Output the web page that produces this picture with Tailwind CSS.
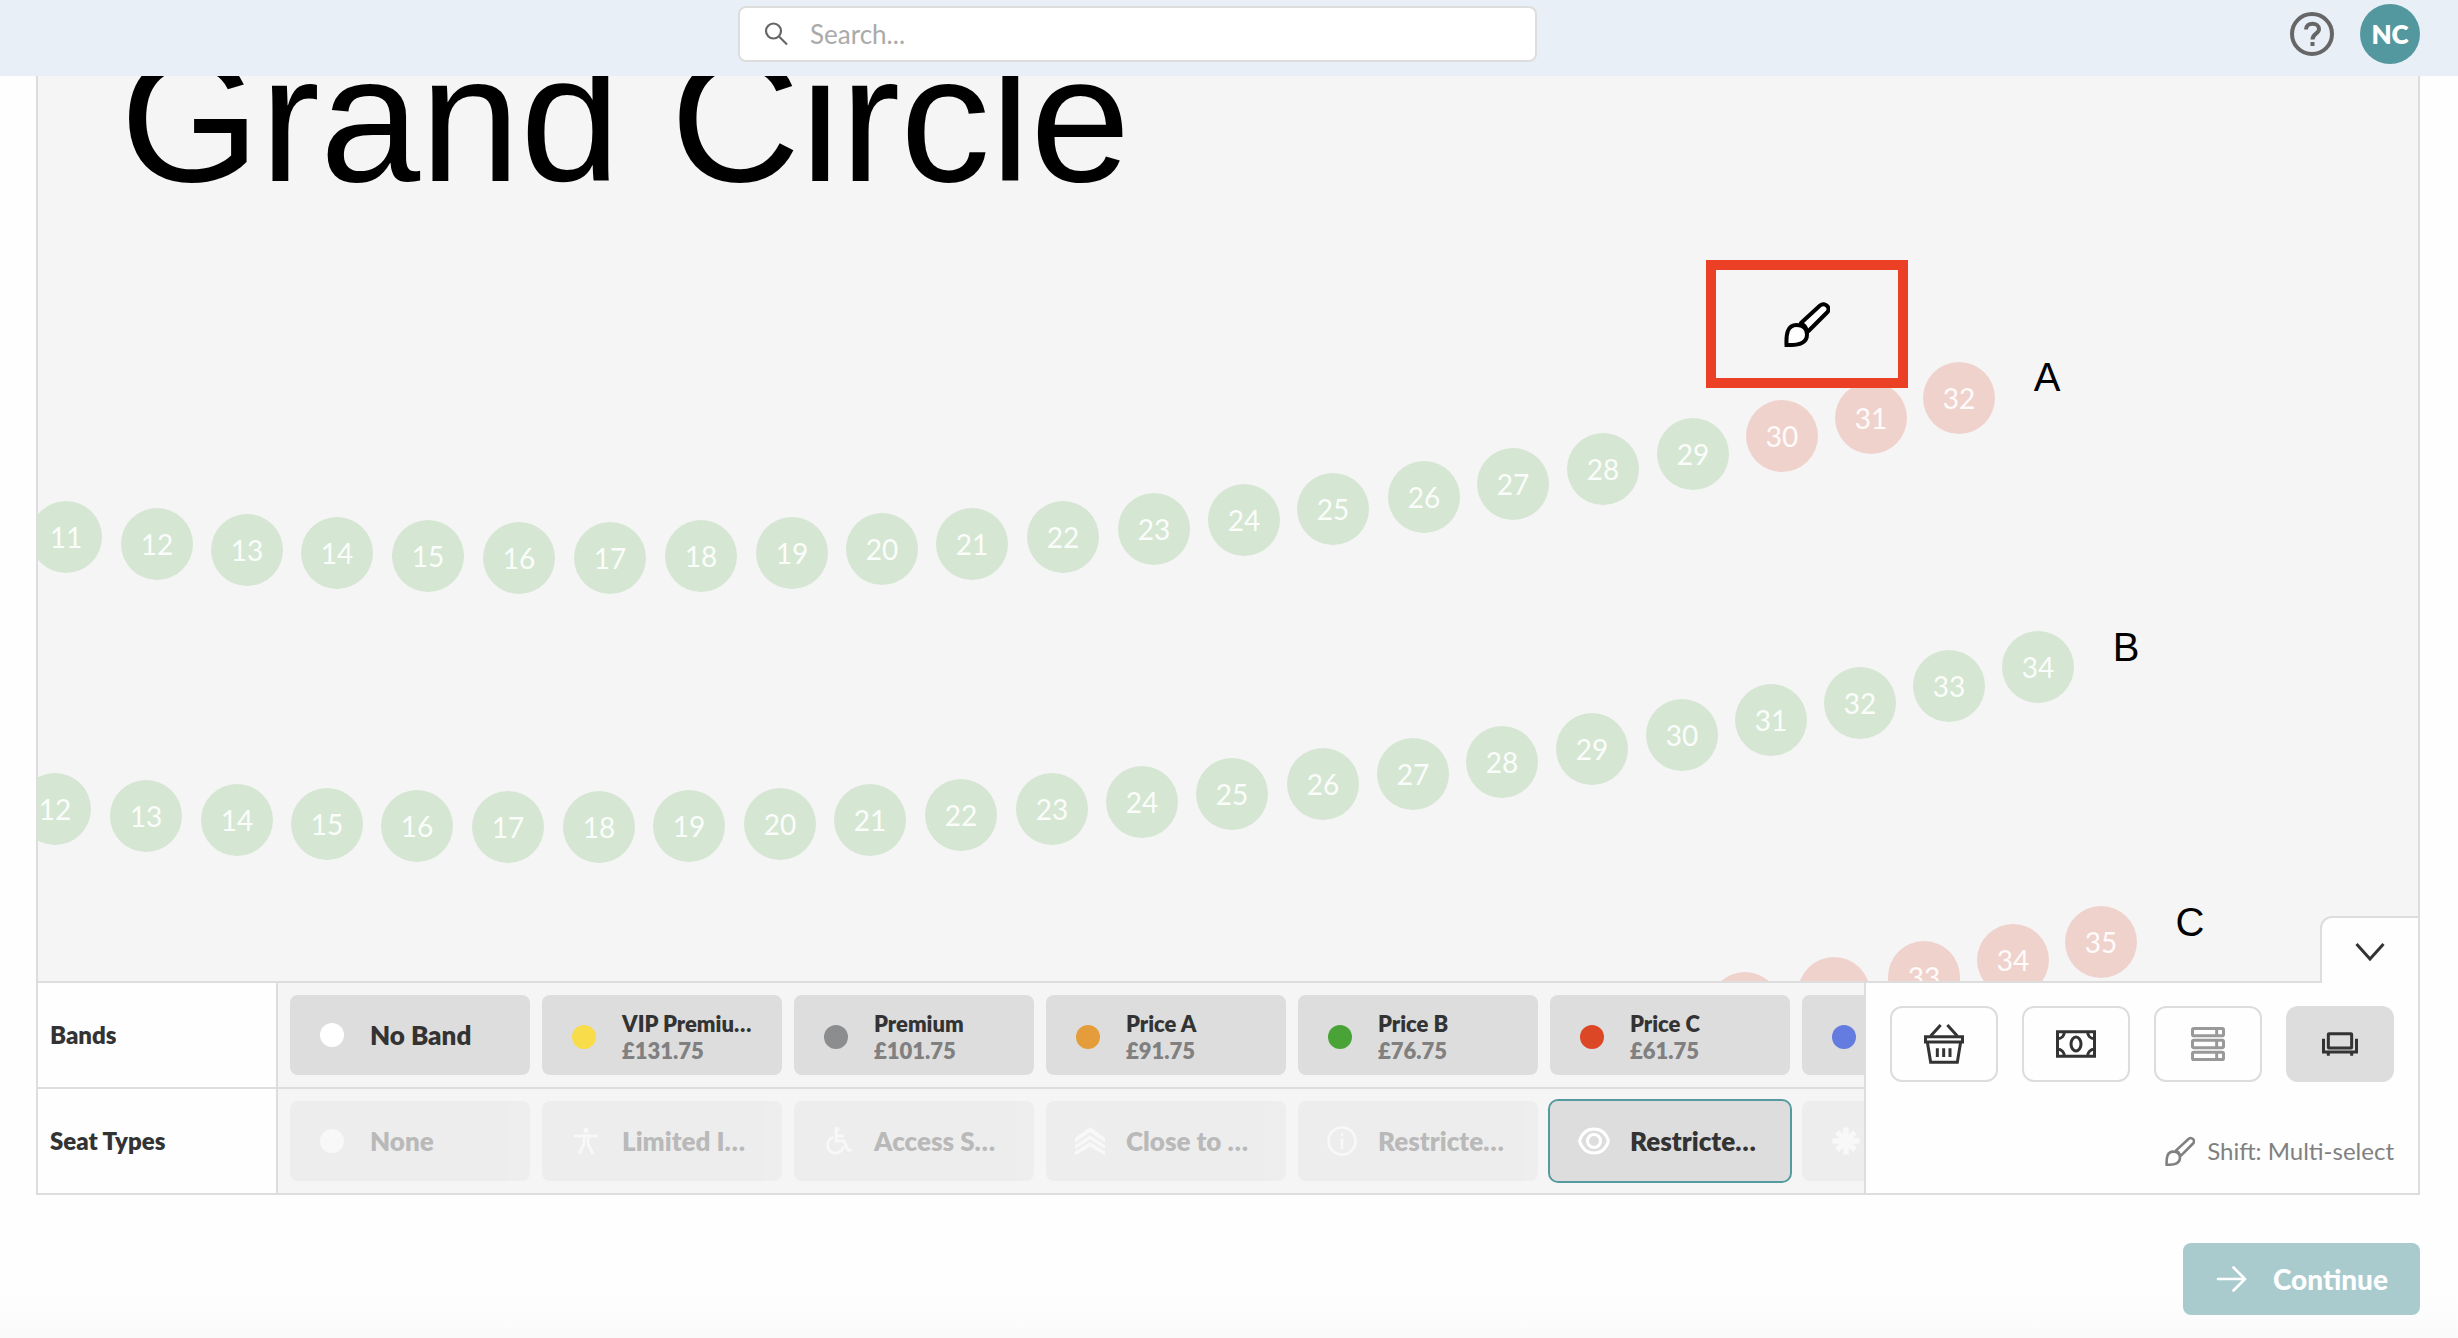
<!DOCTYPE html>
<html lang="en">
<head>
  <meta charset="UTF-8">
  <meta name="viewport" content="width=device-width, initial-scale=1.0">
  <title>Seating Plan - Grand Circle</title>
  <script src="https://cdn.jsdelivr.net/npm/@tailwindcss/browser@4"></script>
</head>
<body class="min-h-screen flex flex-col bg-[#fefefe] font-['Lato',sans-serif] text-[#333333]">

  <!-- Shared icons -->
  <svg class="hidden">
    <symbol id="brush" viewBox="0 0 46 46">
      <path d="M17 22 36 4.500c5-4 11.500 2.500 7 7L24.500 30" stroke-width="4" stroke="currentColor" stroke-linecap="round"/>
      <path d="M2.500 44C2 33 3.500 24 12.500 24c7 0 10.500 4 10.500 9.500C23 41.500 16 44.500 2.500 44Z" stroke-width="4" stroke="currentColor"/>
      <path d="M17 22.500c4 1 5.500 3.500 6.500 7.500" stroke-width="3" stroke="currentColor" fill="none"/>
    </symbol>
  </svg>

  <!-- Header -->
  <header class="h-[76px] shrink-0 bg-[#e8eff7] flex items-start justify-between pr-[38px]">
    <label for="search" class="ml-[30.5%] mt-1.5 w-[33%] h-14 flex items-center gap-[22px] px-6 bg-white border-2 border-[#dddddd] rounded-lg">
      <svg class="w-6 h-6 shrink-0" viewBox="0 0 24 24" fill="none" stroke="#666666" stroke-width="2.200">
        <circle cx="9.500" cy="9" r="7.500"/>
        <path d="m15 14.500 8 8"/>
      </svg>
      <input id="search" type="text" placeholder="Search..." aria-label="Search" class="w-full text-[26px] leading-8 placeholder:text-[#aaaaaa] focus:outline-none">
    </label>
    <div class="flex items-center gap-[26px] mt-1">
      <button type="button" aria-label="Help" class="w-11 h-11">
        <svg class="w-11 h-11" viewBox="0 0 44 44" fill="none" stroke="#666666" stroke-width="4">
          <circle cx="22" cy="22" r="20"/>
          <path d="M16 17.500c0-8 13-7.500 13-.5 0 5-6.500 4.500-6.500 10.500"/>
          <path d="M22.500 30v4"/>
        </svg>
      </button>
      <button type="button" class="w-15 h-15 rounded-full bg-[#54989f] text-white text-[26px] leading-8 font-extrabold">NC</button>
    </div>
  </header>

  <!-- Seating plan -->
  <main class="flex-1 flex flex-col ml-9 mr-[38px]">
    <section id="seat-map" class="flex-1 relative overflow-hidden bg-[#f5f5f5] border-x-2 border-[#dddddd] text-black font-['Liberation_Sans',sans-serif]">
      <h1 class="absolute left-[82px] -top-[61px] text-[180px] leading-[208px] whitespace-nowrap">Grand Circle</h1>
      <div class="absolute z-10 left-[1668px] top-[184px] w-[202px] h-[128px] border-10 border-[#eb4025] flex items-center justify-center">
        <svg class="w-[46px] h-[46px] text-black" fill="white"><use href="#brush"/></svg>
      </div>
    </section>

    <!-- Bands and seat types -->
    <section class="relative flex border-2 border-[#dddddd]">
      <button type="button" aria-label="Collapse panel" class="absolute bottom-full -right-0.5 w-[100px] h-[67px] bg-[#fefefe] border-2 border-b-0 border-[#dddddd] rounded-tl-xl flex items-center justify-center">
        <svg class="w-8 h-8" viewBox="0 0 32 32" fill="none" stroke="#333333" stroke-width="3"><path d="m2.500 9 13.500 15L29.500 9"/></svg>
      </button>

      <div class="w-60 shrink-0 border-r-2 border-[#dddddd] text-2xl font-extrabold">
        <h2 class="h-[104px] px-3 flex items-center">Bands</h2>
        <h2 class="h-[106px] px-3 flex items-center border-t-2 border-[#dddddd]">Seat Types</h2>
      </div>

      <div class="flex-1 min-w-0 overflow-hidden bg-[#f5f5f5]">
        <div id="bands" class="flex gap-3 p-3"></div>
        <div id="seat-types" class="flex gap-3 p-3 border-t-2 border-[#dddddd]">
          <button type="button" disabled class="w-60 h-20 shrink-0 pl-7 flex items-center rounded-lg bg-[#dddddd] opacity-30 text-[26px] leading-8 font-extrabold">
            <span class="w-7 mr-6 flex justify-center"><span class="w-6 h-6 rounded-full bg-white"></span></span>None
          </button>
          <button type="button" disabled class="w-60 h-20 shrink-0 pl-7 flex items-center gap-5 rounded-lg bg-[#dddddd] opacity-30 text-[26px] leading-8 font-extrabold">
            <svg class="w-8 h-8" viewBox="0 0 32 32" fill="none" stroke="white" stroke-width="2.800">
              <circle cx="16" cy="5.500" r="2.500" fill="white" stroke="none"/>
              <path d="M4 11h24"/>
              <path d="m9 29 5-10v-8h4v8l5 10" />
            </svg>Limited I…
          </button>
          <button type="button" disabled class="w-60 h-20 shrink-0 pl-7 flex items-center gap-5 rounded-lg bg-[#dddddd] opacity-30 text-[26px] leading-8 font-extrabold">
            <svg class="w-8 h-8" viewBox="0 0 32 32" fill="none" stroke="white" stroke-width="2.800">
              <circle cx="15" cy="4.500" r="2.500" fill="white" stroke="none"/>
              <path d="M14 6v10h8l4 9h3.500M14 11h8"/>
              <path d="M11 12.500a8 8 0 1 0 10.500 9"/>
            </svg>Access S…
          </button>
          <button type="button" disabled class="w-60 h-20 shrink-0 pl-7 flex items-center gap-5 rounded-lg bg-[#dddddd] opacity-30 text-[26px] leading-8 font-extrabold">
            <svg class="w-8 h-8" viewBox="0 0 32 32" fill="white">
              <path d="M1 13 16 2l15 11v4.500L16 7.500l-15 10ZM1 20l15-10 15 10v4L16 14.500 1 24ZM1 26.500l15-9.500 15 9.500v4L16 21.500 1 30.500Z"/>
            </svg>Close to …
          </button>
          <button type="button" disabled class="w-60 h-20 shrink-0 pl-7 flex items-center gap-5 rounded-lg bg-[#dddddd] opacity-30 text-[26px] leading-8 font-extrabold">
            <svg class="w-8 h-8" viewBox="0 0 32 32" fill="none" stroke="white" stroke-width="2.600">
              <circle cx="16" cy="16" r="13.500"/>
              <path d="M16 8v3.500M16 13.500V24"/>
            </svg>Restricte…
          </button>
          <button type="button" aria-pressed="true" class="w-60 h-20 shrink-0 pl-7 flex items-center gap-5 rounded-lg bg-[#dddddd] outline-2 outline-[#549a9f] text-[26px] leading-8 font-extrabold">
            <svg class="w-8 h-8" viewBox="0 0 32 32" fill="none" stroke="white" stroke-width="3">
              <path d="M1.500 16C4 8 9 4 16 4s12 4 14.500 12C28 24 23 28 16 28S4 24 1.500 16Z"/>
              <circle cx="16" cy="16" r="6.500"/>
            </svg>Restricte…
          </button>
          <button type="button" disabled aria-label="Other" class="w-60 h-20 shrink-0 pl-7 flex items-center gap-5 rounded-lg bg-[#dddddd] opacity-30">
            <svg class="w-8 h-8" viewBox="0 0 32 32" fill="none" stroke="white" stroke-width="5.500">
              <path d="M16 2.500v27M2.500 16h27M7 7l18 18M25 7 7 25"/>
            </svg>
          </button>
        </div>
      </div>

      <!-- Selection tools -->
      <div class="w-[554px] shrink-0 border-l-2 border-[#dddddd] bg-[#fefefe] px-6 pt-[23px] pb-[26px] flex flex-col justify-between">
        <div class="grid grid-cols-4 gap-6">
          <button type="button" aria-label="Basket" class="h-[76px] rounded-xl border-2 border-[#dddddd] flex items-center justify-center">
            <svg class="w-10 h-10" viewBox="0 0 120 120" fill="none" stroke="#333333" stroke-width="9">
              <path d="M50 3 20 36M70 3l30 33"/>
              <path d="M4.500 38h111v16H4.500Z"/>
              <path d="m10 54 10 61h80l10-61"/>
              <path d="M40 73v26M59 73v26M78 73v26"/>
            </svg>
          </button>
          <button type="button" aria-label="Payment" class="h-[76px] rounded-xl border-2 border-[#dddddd] flex items-center justify-center">
            <svg class="w-10 h-7" viewBox="0 0 120 84" fill="none" stroke="#333333" stroke-width="9">
              <path d="M4.500 5.500h111v73H4.500Z"/>
              <ellipse cx="60" cy="42" rx="15" ry="21"/>
              <path d="M25 5c0 13-8 21-21 21M95 5c0 13 8 21 21 21M25 79c0-13-8-21-21-21M95 79c0-13 8-21 21-21"/>
            </svg>
          </button>
          <button type="button" aria-label="Rows" class="h-[76px] rounded-xl border-2 border-[#dddddd] flex items-center justify-center">
            <svg class="w-[34px] h-[34px]" viewBox="0 0 102 102" fill="none" stroke="#999999" stroke-width="9">
              <rect x="4.500" y="4.500" width="93" height="22" rx="4"/>
              <rect x="4.500" y="40" width="93" height="22" rx="4"/>
              <rect x="4.500" y="75.500" width="93" height="22" rx="4"/>
              <path d="M77 4v23M77 40v23M77 75v23"/>
            </svg>
          </button>
          <button type="button" aria-label="Seats" aria-pressed="true" class="h-[76px] rounded-xl bg-[#dddddd] flex items-center justify-center">
            <svg class="w-9 h-6" viewBox="0 0 108 72" fill="none" stroke="#333333" stroke-width="9">
              <rect x="19" y="5" width="70" height="43" rx="2"/>
              <path d="M4.500 20v40h99V20"/>
              <path d="M19 62v9M89 62v9"/>
            </svg>
          </button>
        </div>
        <p class="flex items-center justify-end gap-3 text-2xl text-[#808080]">
          <svg class="w-[30px] h-[30px]" fill="none"><use href="#brush"/></svg>
          Shift: Multi-select
        </p>
      </div>
    </section>
  </main>

  <!-- Footer -->
  <footer class="flex justify-end pt-12 pb-[23px] pr-[38px] bg-linear-to-t from-[#fafafa] to-[#fefefe] to-30%">
    <button type="button" class="h-18 px-8 flex items-center gap-[26px] rounded-lg bg-[#aacbce] text-white text-[28px] leading-8 font-black">
      <svg class="w-8 h-8" viewBox="0 0 32 32" fill="none" stroke="white" stroke-width="2.600" stroke-linecap="round">
        <path d="M3 16h27M18.500 4.500 30 16 18.500 27.500"/>
      </svg>
      Continue
    </button>
  </footer>

  <script>
    // Each row: label, label position, then [number, x, y] for every seat centre
    const rows = [
      { name: 'A', x: 2009, y: 301, red: [30, 31, 32], seats: [
        [11, 28, 461], [12, 119, 468], [13, 209, 474], [14, 299, 477], [15, 390, 480], [16, 481, 482],
        [17, 572, 482], [18, 663, 480], [19, 754, 477], [20, 844, 473], [21, 934, 468], [22, 1025, 461],
        [23, 1116, 453], [24, 1206, 444], [25, 1295, 433], [26, 1386, 421], [27, 1475, 408], [28, 1565, 393],
        [29, 1655, 378], [30, 1744, 360], [31, 1833, 342], [32, 1921, 322]] },
      { name: 'B', x: 2088, y: 571, red: [], seats: [
        [12, 17, 733], [13, 108, 740], [14, 199, 744], [15, 289, 748], [16, 379, 750], [17, 470, 751],
        [18, 561, 751], [19, 651, 750], [20, 742, 748], [21, 832, 744], [22, 923, 739], [23, 1014, 733],
        [24, 1104, 726], [25, 1194, 718], [26, 1285, 708], [27, 1375, 698], [28, 1464, 686], [29, 1554, 673],
        [30, 1644, 659], [31, 1733, 644], [32, 1822, 627], [33, 1911, 610], [34, 2000, 591]] },
      { name: 'C', x: 2152, y: 846, red: [31, 32, 33, 34, 35], seats: [
        [31, 1707, 932], [32, 1796, 917], [33, 1886, 901], [34, 1975, 884], [35, 2063, 866]] },
    ];

    const map = document.getElementById('seat-map');
    rows.forEach(row => {
      row.seats.forEach(([number, x, y]) => {
        const colour = row.red.includes(number) ? 'bg-[#f0d2cd]' : 'bg-[#d5e6d3]';
        map.insertAdjacentHTML('beforeend',
          `<button type="button" class="absolute w-18 h-18 rounded-full ${colour} text-white/90 text-[28px] leading-8 font-['Lato',sans-serif]" style="left:${x - 36}px;top:${y - 36}px">${number}</button>`);
      });
      map.insertAdjacentHTML('beforeend',
        `<span class="absolute w-10 text-center text-[40px] leading-12" style="left:${row.x - 20}px;top:${row.y - 24}px">${row.name}</span>`);
    });

    const bands = [
      { name: 'VIP Premiu…', price: '£131.75', colour: 'bg-[#f8dc4a]' },
      { name: 'Premium', price: '£101.75', colour: 'bg-[#8c8d8f]' },
      { name: 'Price A', price: '£91.75', colour: 'bg-[#e49d3a]' },
      { name: 'Price B', price: '£76.75', colour: 'bg-[#4aa336]' },
      { name: 'Price C', price: '£61.75', colour: 'bg-[#dc4726]' },
      { name: '', price: '', colour: 'bg-[#647be0]' },
    ];

    const bandList = document.getElementById('bands');
    bandList.innerHTML = `
      <button type="button" class="w-60 h-20 shrink-0 pl-7 flex items-center rounded-lg bg-[#dddddd] text-[26px] leading-8 font-extrabold">
        <span class="w-7 mr-6 flex justify-center"><span class="w-6 h-6 rounded-full bg-white"></span></span>No Band
      </button>`;
    bands.forEach(band => {
      bandList.insertAdjacentHTML('beforeend', `
        <button type="button" aria-label="${band.name || 'Price D'}" class="w-60 h-20 shrink-0 pl-7 pt-1 flex items-center rounded-lg bg-[#dddddd] text-[22px] leading-[27px] font-extrabold text-left">
          <span class="w-7 mr-6 flex justify-center"><span class="w-6 h-6 rounded-full ${band.colour}"></span></span>
          <span>${band.name}<span class="block text-[#808080]">${band.price}</span></span>
        </button>`);
    });
  </script>
</body>
</html>
